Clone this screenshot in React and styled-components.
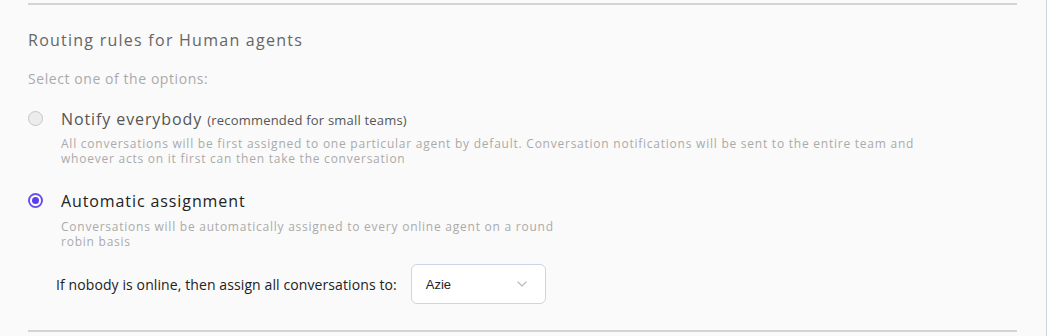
import React from 'react';
import styled, { createGlobalStyle } from 'styled-components';

const GlobalStyle = createGlobalStyle`
  body {
    margin: 0;
    background: #fff;
    font-family: "Open Sans", Lato, sans-serif;
  }
`;

const Panel = styled.div`
  width: 1047px;
  height: 336px;
  box-sizing: border-box;
  background: #fafafa;
  border-right: 1px solid #cfd6df;
  padding: 3px 29px 0 28px;
  display: flex;
  flex-direction: column;
`;

const Divider = styled.div`
  height: 2px;
  background: #d4d4d4;
`;

const Title = styled.h2`
  margin: 25px 0 0;
  font-size: 16px;
  font-weight: 400;
  letter-spacing: 1.25px;
  color: #666;
  line-height: 20px;
`;

const Hint = styled.p`
  margin: 20px 0 0;
  font-size: 14px;
  color: #aaa;
  letter-spacing: 0.57px;
  line-height: 18px;
`;

const Option = styled.div`
  display: grid;
  grid-template-columns: 33px 1fr;
  margin-top: ${p => p.$top}px;
`;

const Radio = styled.span`
  width: 15px;
  height: 15px;
  box-sizing: border-box;
  border-radius: 50%;
  margin-top: 2px;
  position: relative;
  border: ${p => (p.$checked ? '2px solid #6b4ef6' : '1px solid #c6c6c6')};
  background: ${p => (p.$checked ? '#fff' : '#ececec')};
  &::after {
    content: '';
    display: ${p => (p.$checked ? 'block' : 'none')};
    position: absolute;
    inset: 2px;
    border-radius: 50%;
    background: #5b3df0;
  }
`;

const Label = styled.div`
  font-size: 16px;
  letter-spacing: 0.9px;
  line-height: 20px;
  color: ${p => (p.$checked ? '#222' : '#555')};
`;

const Small = styled.span`
  font-size: 13px;
  letter-spacing: 0.2px;
`;

const Desc = styled.p`
  grid-column: 2;
  margin: ${p => p.$gap || 6}px 0 0;
  font-size: 12px;
  line-height: 15px;
  color: #aaa;
  letter-spacing: 0.76px;
  max-width: ${p => p.$max || 'none'};
`;

const Fallback = styled.div`
  display: flex;
  align-items: center;
  gap: 14px;
  margin: 15px 0 0 28px;
  font-size: 14px;
  letter-spacing: 0.1px;
  color: #222;
`;

const Select = styled.div`
  width: 135px;
  height: 40px;
  box-sizing: border-box;
  border: 1px solid #c9d5e8;
  border-radius: 6px;
  background: #fff;
  display: flex;
  align-items: center;
  justify-content: space-between;
  padding: 0 17px 0 14px;
  font-family: "Liberation Sans", Arial, sans-serif;
  font-size: 13px;
  letter-spacing: 0;
  color: #222;
`;

const BottomDivider = styled(Divider)`
  margin-top: auto;
  margin-bottom: 4px;
`;

const Chevron = () => (
  <svg width="12" height="12" viewBox="0 0 12 12" fill="none">
    <path d="M2 4l4 4 4-4" stroke="#b8bcc4" strokeWidth="1.2" strokeLinecap="round" strokeLinejoin="round" />
  </svg>
);

const App = () => {
  return (
    <>
      <GlobalStyle />
      <Panel>
        <Divider />
        <Title>Routing rules for Human agents</Title>
        <Hint>Select one of the options:</Hint>

        <Option $top={21}>
          <Radio />
          <Label>
            Notify everybody <Small>(recommended for small teams)</Small>
          </Label>
          <Desc>
            All conversations will be first assigned to one particular agent by default. Conversation notifications will be sent to the entire team and
            <br />
            whoever acts on it first can then take the conversation
          </Desc>
        </Option>

        <Option $top={25}>
          <Radio $checked />
          <Label $checked>Automatic assignment</Label>
          <Desc $max="512px" $gap={8}>
            Conversations will be automatically assigned to every online agent on a round robin basis
          </Desc>
        </Option>

        <Fallback>
          If nobody is online, then assign all conversations to:
          <Select>
            Azie
            <Chevron />
          </Select>
        </Fallback>

        <BottomDivider />
      </Panel>
    </>
  );
};

export default App;
